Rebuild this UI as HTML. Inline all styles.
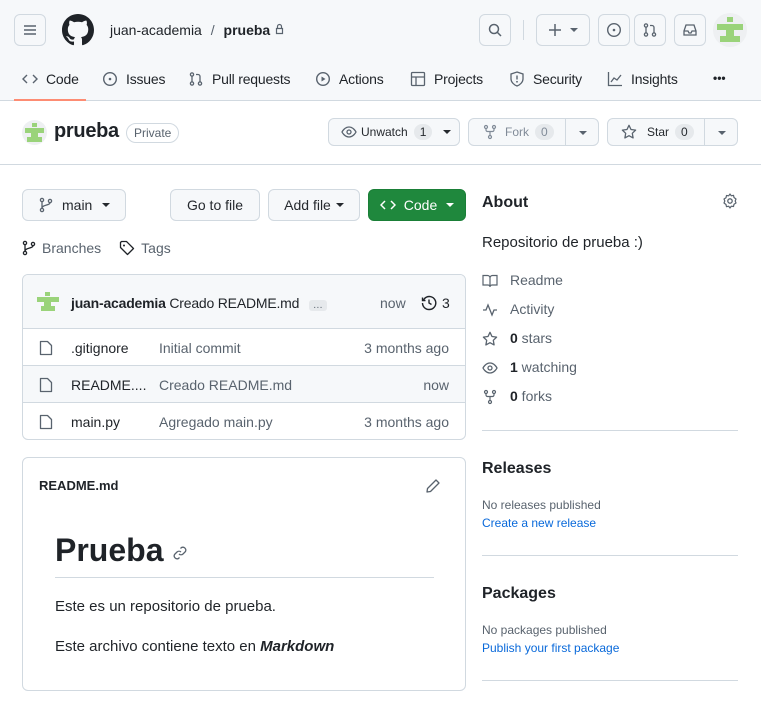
<!DOCTYPE html>
<html><head><meta charset="utf-8"><style>
*{box-sizing:border-box;margin:0;padding:0}
body{width:761px;height:708px;overflow:hidden;background:#fff;font-family:"Liberation Sans",sans-serif;font-size:14px;color:#1f2328;position:relative}
.abs{position:absolute}
.btn{position:absolute;border:1px solid #d1d9e0;border-radius:6px;background:#f6f8fa;display:flex;align-items:center;justify-content:center;font-size:14px;color:#25292e}
svg{display:block}
.muted{color:#59636e}
.cnt{display:inline-block;background:#e6e9ec;border-radius:10px;padding:1px 6px;font-size:12px;margin-left:6px}
.caret{width:0;height:0;border-left:4px solid transparent;border-right:4px solid transparent;border-top:4px solid currentColor;display:inline-block}
.tab{position:absolute;top:71px;display:flex;align-items:center;gap:8px;letter-spacing:-0.2px}
</style></head><body>
<div class="abs" style="left:0;top:0;width:761px;height:101px;background:#f6f8fa;border-bottom:1px solid #d1d9e0"></div>
<div class="btn" style="left:14px;top:14px;width:32px;height:32px"><svg width="16" height="16"><path d="M2 4h12M2 8h12M2 12h12" stroke="#59636e" stroke-width="1.5"/></svg></div>
<svg class="abs" style="left:62px;top:14px" width="32" height="32" viewBox="0 0 16 16"><path fill="#1f2328" d="M8 0C3.58 0 0 3.58 0 8c0 3.54 2.29 6.530 5.47 7.59.4.07.55-.17.55-.38 0-.19-.01-.82-.01-1.49-2.010.37-2.53-.49-2.69-.94-.09-.23-.48-.94-.82-1.130-.28-.15-.68-.52-.01-.53.63-.01 1.08.58 1.23.82.72 1.21 1.87.87 2.33.66.07-.52.28-.87.51-1.07-1.78-.2-3.64-.89-3.64-3.95 0-.87.31-1.59.82-2.15-.08-.2-.36-1.02.08-2.12 0 0 .67-.21 2.2.82.64-.18 1.32-.27 2-.27.68 0 1.36.09 2 .27 1.53-1.04 2.2-.82 2.2-.82.44 1.1.16 1.92.08 2.12.51.56.82 1.27.82 2.15 0 3.07-1.87 3.75-3.65 3.95.29.25.54.73.54 1.48 0 1.07-.01 1.93-.01 2.2 0 .21.15.46.55.38A8.013 8.013 0 0016 8c0-4.42-3.58-8-8-8z"/></svg>
<div class="abs" style="left:110px;top:22px;font-size:14px">juan-academia <span class="muted" style="margin:0 5px">/</span> <b>prueba</b> <svg style="display:inline" width="11" height="12"><path d="M2.5 5.5h6v5h-6zM3.5 5.5V3.5a2 2 0 014 0v2" fill="none" stroke="#59636e" stroke-width="1.2"/></svg></div>
<div class="btn" style="left:479px;top:14px;width:32px;height:32px"><svg width="16" height="16"><circle cx="7" cy="7" r="4.5" fill="none" stroke="#59636e" stroke-width="1.5"/><path d="M10.5 10.5L14 14" stroke="#59636e" stroke-width="1.5"/></svg></div>
<div class="abs" style="left:523px;top:20px;width:1px;height:20px;background:#d1d9e0"></div>
<div class="btn" style="left:536px;top:14px;width:54px;height:32px;gap:8px"><svg width="14" height="14"><path d="M7 1v12M1 7h12" stroke="#59636e" stroke-width="1.5"/></svg><span class="caret" style="color:#59636e"></span></div>
<div class="btn" style="left:598px;top:14px;width:32px;height:32px"><svg width="16" height="16"><circle cx="8" cy="8" r="6.3" fill="none" stroke="#59636e" stroke-width="1.4"/><circle cx="8" cy="8" r="1.3" fill="#59636e"/></svg></div>
<div class="btn" style="left:634px;top:14px;width:32px;height:32px"><svg width="16" height="16"><circle cx="4" cy="3.5" r="1.6" fill="none" stroke="#59636e" stroke-width="1.3"/><circle cx="4" cy="12.5" r="1.6" fill="none" stroke="#59636e" stroke-width="1.3"/><circle cx="12" cy="12.5" r="1.6" fill="none" stroke="#59636e" stroke-width="1.3"/><path d="M4 5v6M12 11V5.5a2 2 0 00-2-2H8" fill="none" stroke="#59636e" stroke-width="1.3"/></svg></div>
<div class="btn" style="left:674px;top:14px;width:32px;height:32px"><svg width="16" height="16"><path d="M2 9l2-6h8l2 6v4H2zM2 9h4l1 2h2l1-2h4" fill="none" stroke="#59636e" stroke-width="1.3"/></svg></div>
<div class="abs" style="left:713px;top:13px;width:34px;height:34px;border-radius:50%;background:#eef0f2;overflow:hidden"><svg width="34" height="34"><g fill="#9ad37a"><rect x="14" y="4" width="6" height="5"/><rect x="4" y="11" width="26" height="6"/><rect x="13" y="17" width="8" height="6"/><rect x="7" y="23" width="20" height="6"/></g></svg></div>
<!-- tabs -->
<span class="tab" style="left:22px"><svg width="16" height="16"><path d="M5 4L1 8l4 4M11 4l4 4-4 4" fill="none" stroke="#59636e" stroke-width="1.4"/></svg>Code</span>
<span class="tab" style="left:102px"><svg width="16" height="16"><circle cx="8" cy="8" r="6.3" fill="none" stroke="#59636e" stroke-width="1.4"/><circle cx="8" cy="8" r="1.3" fill="#59636e"/></svg>Issues</span>
<span class="tab" style="left:188px"><svg width="16" height="16"><circle cx="4" cy="3.5" r="1.6" fill="none" stroke="#59636e" stroke-width="1.3"/><circle cx="4" cy="12.5" r="1.6" fill="none" stroke="#59636e" stroke-width="1.3"/><circle cx="12" cy="12.5" r="1.6" fill="none" stroke="#59636e" stroke-width="1.3"/><path d="M4 5v6M12 11V5.5a2 2 0 00-2-2H8" fill="none" stroke="#59636e" stroke-width="1.3"/></svg>Pull requests</span>
<span class="tab" style="left:315px"><svg width="16" height="16"><circle cx="8" cy="8" r="6.3" fill="none" stroke="#59636e" stroke-width="1.4"/><path d="M6.5 5.5v5l4-2.5z" fill="#59636e"/></svg>Actions</span>
<span class="tab" style="left:410px"><svg width="16" height="16"><rect x="1.5" y="1.5" width="13" height="13" rx="1" fill="none" stroke="#59636e" stroke-width="1.3"/><path d="M1.5 6h13M6 6v8.5" stroke="#59636e" stroke-width="1.3"/></svg>Projects</span>
<span class="tab" style="left:509px"><svg width="16" height="16"><path d="M8 1l6 2v5c0 3-3 6-6 7-3-1-6-4-6-7V3z" fill="none" stroke="#59636e" stroke-width="1.3"/><path d="M8 4.5v4" stroke="#59636e" stroke-width="1.4"/><circle cx="8" cy="10.8" r=".9" fill="#59636e"/></svg>Security</span>
<span class="tab" style="left:607px"><svg width="16" height="16"><path d="M1.5 1v13.5H15M4 11l3-4 3 2 4-5" fill="none" stroke="#59636e" stroke-width="1.3"/></svg>Insights</span>
<span class="tab" style="left:713px;letter-spacing:0;font-weight:bold;font-size:12px">•••</span>
<div class="abs" style="left:14px;top:99px;width:72px;height:2px;background:#fd8c73"></div>
<!-- repo header -->
<div class="abs" style="left:22px;top:120px;width:25px;height:25px;border-radius:50%;background:#eef0f2;overflow:hidden"><svg width="25" height="25"><g fill="#9ad37a"><rect x="10" y="3" width="5" height="4"/><rect x="3" y="8" width="19" height="5"/><rect x="9" y="13" width="7" height="4"/><rect x="5" y="17" width="15" height="5"/></g></svg></div>
<div class="abs" style="left:54px;top:120px;font-size:20px;font-weight:bold;letter-spacing:-0.3px">prueba</div>
<div class="abs" style="left:126px;top:123px;border:1px solid #d1d9e0;border-radius:12px;padding:2px 7px;font-size:12px;color:#59636e">Private</div>
<div class="btn" style="left:328px;top:118px;width:132px;height:28px;justify-content:flex-start;padding-left:12px;font-size:12px"><svg width="16" height="16"><path d="M1 8s2.5-5 7-5 7 5 7 5-2.5 5-7 5-7-5-7-5z" fill="none" stroke="#59636e" stroke-width="1.3"/><circle cx="8" cy="8" r="2" fill="none" stroke="#59636e" stroke-width="1.3"/></svg><span style="margin-left:4px">Unwatch</span><span class="cnt">1</span><span class="caret" style="margin-left:11px"></span></div>
<div class="btn" style="left:468px;top:118px;width:131px;height:28px;justify-content:flex-start;padding-left:14px;font-size:12px;color:#818b98"><svg width="14" height="16"><circle cx="3" cy="3" r="1.5" fill="none" stroke="#818b98" stroke-width="1.2"/><circle cx="11" cy="3" r="1.5" fill="none" stroke="#818b98" stroke-width="1.2"/><circle cx="7" cy="13" r="1.5" fill="none" stroke="#818b98" stroke-width="1.2"/><path d="M3 4.5v1.5a1.5 1.5 0 001.5 1.5h5A1.5 1.5 0 0011 6V4.5M7 7.5v4" fill="none" stroke="#818b98" stroke-width="1.2"/></svg><span style="margin-left:8px">Fork</span><span class="cnt">0</span><span style="position:absolute;left:96px;top:0;bottom:0;width:1px;background:#d1d9e0"></span><span class="caret" style="position:absolute;left:110px;top:12px;color:#59636e"></span></div>
<div class="btn" style="left:607px;top:118px;width:131px;height:28px;justify-content:flex-start;padding-left:13px;font-size:12px"><svg width="16" height="16"><path d="M8 1.3l2 4.2 4.6.6-3.3 3.2.8 4.6L8 11.7l-4.1 2.2.8-4.6L1.4 6.1 6 5.5z" fill="none" stroke="#59636e" stroke-width="1.3" stroke-linejoin="round"/></svg><span style="margin-left:10px">Star</span><span class="cnt">0</span><span style="position:absolute;left:96px;top:0;bottom:0;width:1px;background:#d1d9e0"></span><span class="caret" style="position:absolute;left:110px;top:12px;color:#59636e"></span></div>
<div class="abs" style="left:0;top:164px;width:761px;height:1px;background:#d1d9e0"></div>
<!-- toolbar -->
<div class="btn" style="left:22px;top:189px;width:104px;height:32px;justify-content:flex-start;padding-left:16px"><svg width="14" height="16"><circle cx="3" cy="3" r="1.6" fill="none" stroke="#59636e" stroke-width="1.3"/><circle cx="3" cy="13" r="1.6" fill="none" stroke="#59636e" stroke-width="1.3"/><circle cx="11" cy="4" r="1.6" fill="none" stroke="#59636e" stroke-width="1.3"/><path d="M3 4.6v6.8M11 5.6c0 3-8 2-8 5.5" fill="none" stroke="#59636e" stroke-width="1.3"/></svg><span style="margin-left:9px">main</span><span class="caret" style="margin-left:10px"></span></div>
<div class="btn" style="left:170px;top:189px;width:90px;height:32px">Go to file</div>
<div class="btn" style="left:268px;top:189px;width:92px;height:32px">Add file<span class="caret" style="margin-left:5px"></span></div>
<div class="btn" style="left:368px;top:189px;width:98px;height:32px;background:#1f883d;border-color:#1a7f37;color:#fff;font-weight:500"><svg width="16" height="16"><path d="M5 4L1 8l4 4M11 4l4 4-4 4" fill="none" stroke="#fff" stroke-width="1.5"/></svg><span style="margin-left:8px">Code</span><span class="caret" style="margin-left:9px"></span></div>
<div class="abs muted" style="left:22px;top:240px;display:flex;align-items:center;gap:6px"><svg width="14" height="16"><circle cx="3" cy="3" r="1.6" fill="none" stroke="#1f2328" stroke-width="1.3"/><circle cx="3" cy="13" r="1.6" fill="none" stroke="#1f2328" stroke-width="1.3"/><circle cx="11" cy="4" r="1.6" fill="none" stroke="#1f2328" stroke-width="1.3"/><path d="M3 4.6v6.8M11 5.6c0 3-8 2-8 5.5" fill="none" stroke="#1f2328" stroke-width="1.3"/></svg>Branches<svg style="margin-left:12px" width="16" height="16"><path d="M1.5 2.5v5l7 7 6-6-7-7h-5z" fill="none" stroke="#1f2328" stroke-width="1.3" stroke-linejoin="round"/><circle cx="5" cy="5.5" r="1" fill="#1f2328"/></svg>Tags</div>
<!-- file table -->
<div class="abs" style="left:22px;top:274px;width:444px;height:166px;border:1px solid #d1d9e0;border-radius:6px;overflow:hidden">
<div style="height:54px;background:#f6f8fa;border-bottom:1px solid #d1d9e0;position:relative">
<svg class="abs" style="left:14px;top:17px" width="22" height="20"><g fill="#9ad37a"><rect x="8" y="0" width="5" height="4"/><rect x="0" y="5" width="22" height="5"/><rect x="7" y="10" width="7" height="4"/><rect x="4" y="14" width="14" height="5"/></g></svg>
<div class="abs" style="left:48px;top:20px;font-size:14px;letter-spacing:-0.2px"><b style="font-weight:600">juan-academia</b> Creado README.md <span style="display:inline-block;background:#e6e9ec;border-radius:3px;font-size:10px;padding:0 4px;margin-left:6px;color:#59636e">…</span></div>
<div class="abs muted" style="left:357px;top:20px">now</div>
<svg class="abs" style="left:398px;top:20px" width="16" height="16"><path d="M2.3 5.5A6.5 6.5 0 118 14.5 6.5 6.5 0 011.5 8" fill="none" stroke="#1f2328" stroke-width="1.4"/><path d="M1.5 2.5v3h3M8 4.5V8l2.5 1.5" fill="none" stroke="#1f2328" stroke-width="1.4"/></svg>
<div class="abs" style="left:419px;top:20px">3</div>
</div>
<div style="height:37px;border-bottom:1px solid #d1d9e0;position:relative"><svg class="abs" style="left:16px;top:11px" width="14" height="16"><path d="M1.5 1.5h7l4 4v9h-11z" fill="none" stroke="#59636e" stroke-width="1.3" stroke-linejoin="round"/></svg><span class="abs" style="left:48px;top:11px">.gitignore</span><span class="abs muted" style="left:136px;top:11px">Initial commit</span><span class="abs muted" style="right:16px;top:11px">3 months ago</span></div>
<div style="height:37px;border-bottom:1px solid #d1d9e0;position:relative;background:#f6f8fa"><svg class="abs" style="left:16px;top:11px" width="14" height="16"><path d="M1.5 1.5h7l4 4v9h-11z" fill="none" stroke="#59636e" stroke-width="1.3" stroke-linejoin="round"/></svg><span class="abs" style="left:48px;top:11px">README....</span><span class="abs muted" style="left:136px;top:11px">Creado README.md</span><span class="abs muted" style="right:16px;top:11px">now</span></div>
<div style="height:37px;position:relative"><svg class="abs" style="left:16px;top:11px" width="14" height="16"><path d="M1.5 1.5h7l4 4v9h-11z" fill="none" stroke="#59636e" stroke-width="1.3" stroke-linejoin="round"/></svg><span class="abs" style="left:48px;top:11px">main.py</span><span class="abs muted" style="left:136px;top:11px">Agregado main.py</span><span class="abs muted" style="right:16px;top:11px">3 months ago</span></div>
</div>
<!-- readme -->
<div class="abs" style="left:22px;top:457px;width:444px;height:234px;border:1px solid #d1d9e0;border-radius:6px">
<div class="abs" style="left:16px;top:20px;font-size:13px;font-weight:600">README.md</div>
<svg class="abs" style="left:402px;top:20px" width="16" height="16"><path d="M11 2l3 3-8.5 8.5-3.5.5.5-3.5z" fill="none" stroke="#59636e" stroke-width="1.3" stroke-linejoin="round"/></svg>
<div class="abs" style="left:32px;top:74px;font-size:32px;font-weight:600">Prueba <svg style="display:inline;vertical-align:middle" width="16" height="16"><path d="M7 9a3 3 0 004 0l2.5-2.5a3 3 0 00-4-4L8.5 3.5M9 7a3 3 0 00-4 0L2.5 9.5a3 3 0 004 4l1-1" fill="none" stroke="#59636e" stroke-width="1.3"/></svg></div>
<div class="abs" style="left:32px;top:119px;width:379px;height:1px;background:#d1d9e0"></div>
<div class="abs" style="left:32px;top:140px;font-size:15px">Este es un repositorio de prueba.</div>
<div class="abs" style="left:32px;top:180px;font-size:15px">Este archivo contiene texto en <b><i>Markdown</i></b></div>
</div>
<!-- sidebar -->
<div class="abs" style="left:482px;top:194px;font-size:16px;font-weight:600">About</div>
<svg class="abs" style="left:722px;top:193px" width="16" height="16"><circle cx="8" cy="8" r="2.2" fill="none" stroke="#59636e" stroke-width="1.3"/><path d="M8 1l1.3 1.8 2.2-.5.5 2.2L14 6l-.8 2 .8 2-2 1.3-.5 2.2-2.2-.3L8 15l-1.3-1.8-2.2.5-.5-2.2L2 10l.8-2L2 6l2-1.3.5-2.2 2.2.3z" fill="none" stroke="#59636e" stroke-width="1.2" stroke-linejoin="round"/></svg>
<div class="abs" style="left:482px;top:234px;font-size:15px">Repositorio de prueba :)</div>
<div class="abs muted" style="left:482px;top:266px;line-height:29px">
<div style="display:flex;align-items:center;gap:12px"><svg width="16" height="16"><path d="M1 2.5h4.5A2.5 2.5 0 018 5v9a2 2 0 00-2-2H1zM15 2.5h-4.5A2.5 2.5 0 008 5v9a2 2 0 012-2h5z" fill="none" stroke="#59636e" stroke-width="1.2"/></svg>Readme</div>
<div style="display:flex;align-items:center;gap:12px"><svg width="16" height="16"><path d="M1 8h3l2-5 4 10 2-5h3" fill="none" stroke="#59636e" stroke-width="1.3"/></svg>Activity</div>
<div style="display:flex;align-items:center;gap:12px"><svg width="16" height="16"><path d="M8 1.3l2 4.2 4.6.6-3.3 3.2.8 4.6L8 11.7l-4.1 2.2.8-4.6L1.4 6.1 6 5.5z" fill="none" stroke="#59636e" stroke-width="1.3" stroke-linejoin="round"/></svg><span><b style="color:#1f2328;font-weight:600">0</b> stars</span></div>
<div style="display:flex;align-items:center;gap:12px"><svg width="16" height="16"><path d="M1 8s2.5-5 7-5 7 5 7 5-2.5 5-7 5-7-5-7-5z" fill="none" stroke="#59636e" stroke-width="1.3"/><circle cx="8" cy="8" r="2" fill="none" stroke="#59636e" stroke-width="1.3"/></svg><span><b style="color:#1f2328;font-weight:600">1</b> watching</span></div>
<div style="display:flex;align-items:center;gap:12px"><svg width="16" height="16"><circle cx="4" cy="3" r="1.5" fill="none" stroke="#59636e" stroke-width="1.2"/><circle cx="12" cy="3" r="1.5" fill="none" stroke="#59636e" stroke-width="1.2"/><circle cx="8" cy="13" r="1.5" fill="none" stroke="#59636e" stroke-width="1.2"/><path d="M4 4.5v1.5a1.5 1.5 0 001.5 1.5h5A1.5 1.5 0 0012 6V4.5M8 7.5v4" fill="none" stroke="#59636e" stroke-width="1.2"/></svg><span><b style="color:#1f2328;font-weight:600">0</b> forks</span></div>
</div>
<div class="abs" style="left:482px;top:430px;width:256px;height:1px;background:#d1d9e0"></div>
<div class="abs" style="left:482px;top:460px;font-size:16px;font-weight:600">Releases</div>
<div class="abs muted" style="left:482px;top:498px;font-size:12px">No releases published</div>
<div class="abs" style="left:482px;top:516px;font-size:12px;color:#0969da">Create a new release</div>
<div class="abs" style="left:482px;top:555px;width:256px;height:1px;background:#d1d9e0"></div>
<div class="abs" style="left:482px;top:585px;font-size:16px;font-weight:600">Packages</div>
<div class="abs muted" style="left:482px;top:623px;font-size:12px">No packages published</div>
<div class="abs" style="left:482px;top:641px;font-size:12px;color:#0969da">Publish your first package</div>
<div class="abs" style="left:482px;top:680px;width:256px;height:1px;background:#d1d9e0"></div>
</body></html>
